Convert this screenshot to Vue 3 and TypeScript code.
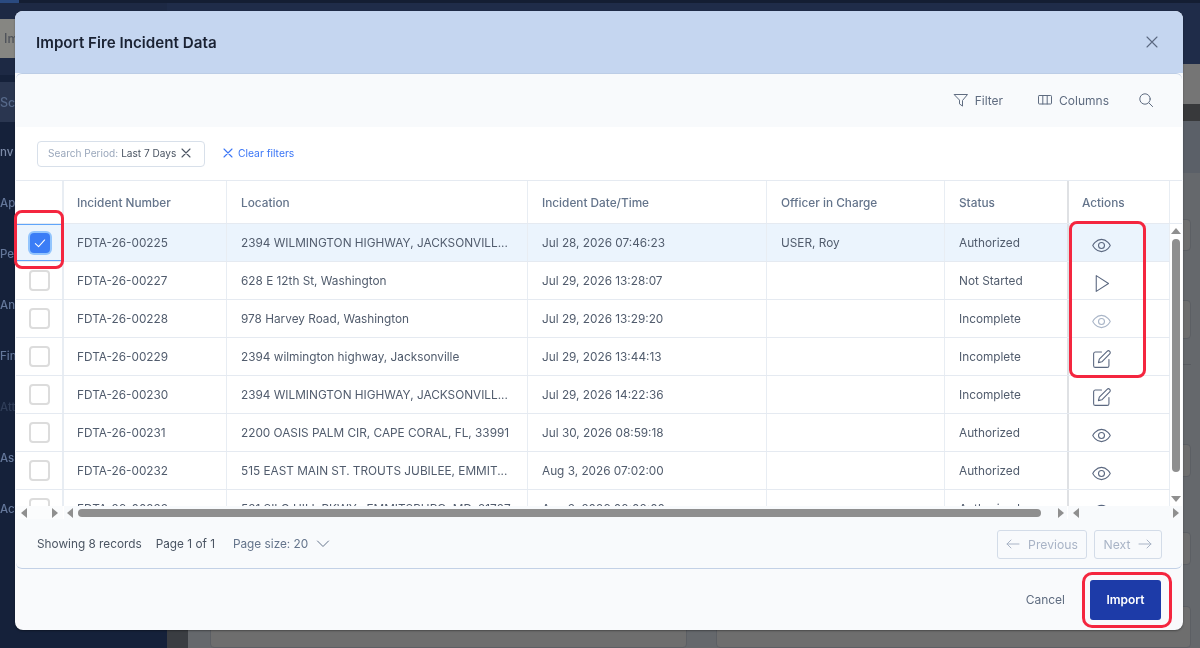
<script setup lang="ts">
type Action = 'eye' | 'play' | 'eye-off' | 'edit'
interface Row {
  id: string
  location: string
  date: string
  officer: string
  status: string
  action: Action
  selected?: boolean
}
const columns: string[] = ['Incident Number', 'Location', 'Incident Date/Time', 'Officer in Charge', 'Status']
const rows: Row[] = [
  { id: 'FDTA-26-00225', location: '2394 WILMINGTON HIGHWAY, JACKSONVILL...', date: 'Jul 28, 2026 07:46:23', officer: 'USER, Roy', status: 'Authorized', action: 'eye', selected: true },
  { id: 'FDTA-26-00227', location: '628 E 12th St, Washington', date: 'Jul 29, 2026 13:28:07', officer: '', status: 'Not Started', action: 'play' },
  { id: 'FDTA-26-00228', location: '978 Harvey Road, Washington', date: 'Jul 29, 2026 13:29:20', officer: '', status: 'Incomplete', action: 'eye-off' },
  { id: 'FDTA-26-00229', location: '2394 wilmington highway, Jacksonville', date: 'Jul 29, 2026 13:44:13', officer: '', status: 'Incomplete', action: 'edit' },
  { id: 'FDTA-26-00230', location: '2394 WILMINGTON HIGHWAY, JACKSONVILL...', date: 'Jul 29, 2026 14:22:36', officer: '', status: 'Incomplete', action: 'edit' },
  { id: 'FDTA-26-00231', location: '2200 OASIS PALM CIR, CAPE CORAL, FL, 33991', date: 'Jul 30, 2026 08:59:18', officer: '', status: 'Authorized', action: 'eye' },
  { id: 'FDTA-26-00232', location: '515 EAST MAIN ST. TROUTS JUBILEE, EMMIT...', date: 'Aug 3, 2026 07:02:00', officer: '', status: 'Authorized', action: 'eye' },
  { id: 'FDTA-26-00233', location: '531 SILO HILL PKWY., EMMITSBURG, MD, 21727', date: 'Aug 3, 2026 08:08:00', officer: '', status: 'Authorized', action: 'eye' },
]
const navItems: string[] = ['nv', 'Ap', 'Pe', 'Ana', 'Fin', 'Att', 'Ass', 'Act']
</script>

<template>
  <div class="page">
    <div class="backdrop">
      <div class="top-strip"><span class="strip-tab"></span></div>
      <div class="backdrop-main">
        <aside class="side">
          <div class="side-head"><span class="ghost-btn">Im</span></div>
          <div class="side-active">Sc</div>
          <div
            v-for="item in navItems"
            :key="item"
            class="side-item"
            :class="{ dim: item === 'Att' }"
          >{{ item }}</div>
        </aside>
        <div class="gutter-col">
          <div class="gutter-top"></div>
          <div class="gutter-body"></div>
        </div>
        <main class="content">
          <div class="content-top"></div>
          <div class="band-a"></div>
          <div class="band-b"></div>
          <div class="band-c"></div>
          <div class="form">
            <div class="ghost-field f1"></div>
            <div class="ghost-field f2"></div>
            <div class="ghost-rule"></div>
            <div class="ghost-field f3"></div>
            <div class="ghost-field f4"></div>
            <div class="ghost-grid">
              <div class="ghost-box"></div>
              <div class="ghost-box"></div>
            </div>
          </div>
        </main>
      </div>
    </div>

    <section class="modal">
      <header class="modal-head">
        <h1>Import Fire Incident Data</h1>
        <svg class="close" viewBox="0 0 12 12" width="12" height="12"><path d="M1 1l10 10M11 1L1 11" /></svg>
      </header>

      <div class="card">
        <div class="toolbar">
          <span class="tool">
            <svg viewBox="0 0 16 16" width="16" height="16"><path d="M1.5 2.5h13l-5 6v5.6l-3-2.2V8.5z" /></svg>
            Filter
          </span>
          <span class="tool">
            <svg viewBox="0 0 16 16" width="16" height="16"><rect x="1.5" y="3.5" width="13" height="8.5" rx=".8" /><path d="M5.8 3.5V12M10.2 3.5V12" /></svg>
            Columns
          </span>
          <svg class="search" viewBox="0 0 16 16" width="16" height="16"><circle cx="7" cy="7" r="5.2" /><path d="M11 11l3.6 3.6" /></svg>
        </div>

        <div class="filters">
          <span class="chip">
            <span class="chip-key">Search Period:</span>
            <span class="chip-val">Last 7 Days</span>
            <svg viewBox="0 0 10 10" width="10" height="10"><path d="M1 1l8 8M9 1L1 9" /></svg>
          </span>
          <span class="clear">
            <svg viewBox="0 0 10 10" width="10" height="10"><path d="M1 1l8 8M9 1L1 9" /></svg>
            Clear filters
          </span>
        </div>

        <div class="table">
          <div class="head">
            <div class="cell pin"></div>
            <div v-for="c in columns" :key="c" class="cell" :class="{ last: c === 'Status', first: c === 'Incident Number' }">{{ c }}</div>
            <div class="cell actions-cell">Actions</div>
            <div class="cell tail"></div>
          </div>
          <div class="body">
            <div class="rows">
              <div v-for="r in rows" :key="r.id" class="row" :class="{ selected: r.selected }">
                <div class="cell pin">
                  <span class="check" :class="{ on: r.selected }">
                    <svg v-if="r.selected" viewBox="0 0 12 12" width="14" height="14"><path d="M2 6.5l2.8 2.6L10 3.4" /></svg>
                  </span>
                </div>
                <div class="cell first">{{ r.id }}</div>
                <div class="cell">{{ r.location }}</div>
                <div class="cell">{{ r.date }}</div>
                <div class="cell">{{ r.officer }}</div>
                <div class="cell last">{{ r.status }}</div>
                <div class="cell actions-cell">
                  <svg class="act" :class="{ faint: r.action === 'eye-off' }" viewBox="0 0 24 24" width="21" height="21">
                    <template v-if="r.action === 'eye' || r.action === 'eye-off'">
                      <path d="M2 12s3.6-7 10-7 10 7 10 7-3.6 7-10 7-10-7-10-7z" />
                      <circle cx="12" cy="12" r="3.4" />
                    </template>
                    <polygon v-else-if="r.action === 'play'" points="6 3 20 12 6 21 6 3" />
                    <template v-else>
                      <path d="M12 3.5H5a2 2 0 0 0-2 2V19a2 2 0 0 0 2 2h13.5a2 2 0 0 0 2-2v-7" />
                      <path d="M18.4 2.6a2.1 2.1 0 0 1 3 3L12.4 14.6 8.5 15.6l1-3.9z" />
                    </template>
                  </svg>
                </div>
              </div>
            </div>
            <div class="vbar">
              <span class="arrow up"></span>
              <span class="vthumb"></span>
              <span class="arrow down"></span>
            </div>
          </div>
          <div class="hbar">
            <div class="hpart hpin"><span class="arrow left"></span><span class="arrow right"></span></div>
            <div class="hpart hmain"><span class="arrow left"></span><span class="hthumb"></span><span class="arrow right"></span></div>
            <div class="hpart hact"><span class="arrow left"></span><span class="arrow right"></span></div>
          </div>
        </div>

        <footer class="pager">
          <span class="dark">Showing 8 records</span>
          <span class="dark second">Page 1 of 1</span>
          <span class="size">
            Page size: 20
            <svg viewBox="0 0 14 8" width="14" height="8"><path d="M1.5 1l5.5 5.5L12.5 1" /></svg>
          </span>
          <span class="pager-btns">
            <span class="page-btn prev">
              <svg viewBox="0 0 14 10" width="14" height="10"><path d="M13 5H1M5 1L1 5l4 4" /></svg>
              Previous
            </span>
            <span class="page-btn next">
              Next
              <svg viewBox="0 0 14 10" width="14" height="10"><path d="M1 5h12M9 1l4 4-4 4" /></svg>
            </span>
          </span>
        </footer>
      </div>

      <footer class="modal-foot">
        <span class="cancel">Cancel</span>
        <button class="import" type="button">Import</button>
      </footer>
    </section>

    <span class="mark mark-check"></span>
    <span class="mark mark-actions"></span>
    <span class="mark mark-import"></span>
  </div>
</template>

<style scoped>
.page {
  position: relative;
  width: 1200px;
  height: 648px;
  overflow: hidden;
  font-family: Inter, "Liberation Sans", sans-serif;
  background: #65686c;
  filter: blur(.3px);
}
.backdrop {
  display: flex;
  flex-direction: column;
  height: 648px;
}
.top-strip {
  height: 3px;
  background: #141e33;
  flex: none;
  display: flex;
}
.strip-tab {
  width: 19px;
  background: #2a4a80;
}
.backdrop-main {
  flex: 1;
  display: flex;
  min-height: 0;
}
.side {
  width: 167px;
  flex: none;
  background: #15213a;
  color: #64779a;
  font-size: 11.5px;
  font-weight: 500;
  overflow: hidden;
}
.side-head {
  height: 72px;
  padding-top: 16px;
  box-sizing: border-box;
  background: #1d2944;
}
.ghost-btn {
  display: flex;
  align-items: center;
  height: 39px;
  padding-left: 4px;
  background: #868682;
  color: #4f535a;
  font-size: 12.5px;
}
.side-active {
  display: flex;
  align-items: center;
  height: 40px;
  margin-top: 7px;
  background: #2a3650;
  color: #56698a;
  font-size: 12.5px;
}
.side-item {
  height: 51px;
  display: flex;
  align-items: center;
}
.side-active + .side-item {
  margin-top: 4px;
  color: #7c8ba8;
}
.side-item.dim {
  color: #2f3d58;
}
.gutter-col {
  width: 21px;
  flex: none;
  display: flex;
  flex-direction: column;
}
.gutter-top {
  height: 72px;
  background: #1f2c49;
}
.gutter-body {
  flex: 1;
  background: #3a3d42;
}
.content {
  flex: 1;
  display: flex;
  flex-direction: column;
  min-width: 0;
}
.content-top {
  height: 72px;
  background: #1f2c49;
}
.band-a {
  height: 47px;
  background: #757575;
}
.band-b {
  height: 21px;
  background: #38393b;
}
.band-c {
  height: 61px;
  background: #5b6068;
}
.form {
  flex: 1;
  background: #65686c;
  padding: 46px 9px 0 22px;
  display: flex;
  flex-direction: column;
}
.ghost-field {
  width: 200px;
  align-self: flex-end;
  background: #6e6e6e;
  border: 1px solid #5c5f64;
  border-radius: 4px;
  box-sizing: border-box;
  flex: none;
}
.f1 { height: 32px; }
.f2 { height: 39px; margin-top: 49px; }
.ghost-rule {
  width: 200px;
  align-self: flex-end;
  height: 1px;
  flex: none;
  margin-top: 25px;
  background: #595c61;
}
.f3 { height: 33px; margin-top: 79px; }
.f4 { height: 33px; margin-top: 55px; }
.ghost-grid {
  display: grid;
  grid-template-columns: 477px 475px;
  gap: 29px;
  margin-top: 41px;
  flex: none;
}
.ghost-box {
  height: 40px;
  background: #6e6e6e;
  border: 1px solid #5c5f64;
  border-radius: 4px;
}

.modal {
  position: absolute;
  left: 15px;
  top: 11px;
  width: 1168px;
  height: 619px;
  border-radius: 8px;
  background: #f9fafc;
  display: flex;
  flex-direction: column;
  overflow: hidden;
  box-shadow: 0 1px 2px rgba(0, 0, 0, .35);
}
.modal-head {
  height: 62px;
  flex: none;
  background: #c5d6f0;
  display: flex;
  align-items: center;
  justify-content: space-between;
  padding: 0 25px 0 21px;
}
.modal-head h1 {
  margin: 0;
  font-size: 15.2px;
  font-weight: 600;
  color: #1a2233;
}
svg {
  fill: none;
  stroke-linecap: round;
  stroke-linejoin: round;
}
.close {
  stroke: #5b6880;
  stroke-width: 1.1;
}
.card {
  margin: 0 1px;
  height: 496px;
  flex: none;
  box-sizing: border-box;
  border-radius: 6px;
  border-top: 1px solid #bccde6;
  border-bottom: 1px solid #c3d1e6;
  background: #f8fafc;
  display: flex;
  flex-direction: column;
  overflow: hidden;
}
.toolbar {
  height: 53px;
  flex: none;
  display: flex;
  align-items: center;
  justify-content: flex-end;
  padding: 0 28px 1px 0;
  box-sizing: border-box;
  font-size: 12px;
  color: #5f6c80;
}
.tool {
  display: flex;
  align-items: center;
  gap: 6px;
  margin-right: 34px;
}
.tool svg, .search {
  stroke: #5f6c80;
  stroke-width: 1;
}
.tool:nth-child(2) {
  margin-right: 29px;
}
.filters {
  height: 53px;
  flex: none;
  background: #fff;
  display: flex;
  align-items: center;
  padding-left: 21px;
  gap: 18px;
  font-size: 10.1px;
}
.chip {
  box-sizing: border-box;
  width: 168px;
  height: 26px;
  display: flex;
  align-items: center;
  padding: 0 0 1px 10px;
  border: 1px solid #d8e0ea;
  border-radius: 4px;
  gap: 3px;
}
.chip-key { color: #9aa7bb; }
.chip-val { color: #4b5563; }
.chip svg {
  stroke: #4b5563;
  stroke-width: 1.1;
  margin-left: 2px;
}
.clear {
  display: flex;
  align-items: center;
  gap: 5px;
  color: #3b76f6;
  font-size: 10.3px;
  padding-bottom: 1px;
}
.clear svg {
  stroke: #3b76f6;
  stroke-width: 1.1;
}
.table {
  flex: none;
  background: #fff;
  border-top: 1px solid #e5eaf1;
  font-size: 11.8px;
  color: #515c6d;
}
.head {
  display: grid;
  grid-template-columns: 48px 163px 301px 239px 178px 124px 101px 12px;
  height: 43px;
  box-sizing: border-box;
  border-bottom: 1px solid #e5eaf1;
  color: #64748b;
  font-weight: 500;
}
.cell {
  box-sizing: border-box;
  display: flex;
  align-items: center;
  padding-left: 14px;
  border-right: 1px solid #e8edf3;
  white-space: nowrap;
  overflow: hidden;
}
.head .cell {
  padding-top: 2px;
}
.cell.first {
  padding-left: 13px;
}
.cell.last {
  border-right: 2px solid #dfe1e4;
}
.cell.pin {
  padding-left: 1px;
  justify-content: center;
  border-right-width: 2px;
}
.cell.tail {
  border-right: 0;
  padding: 0;
}
.body {
  display: flex;
  height: 282px;
  overflow: hidden;
}
.rows {
  width: 1154px;
  flex: none;
}
.row {
  display: grid;
  grid-template-columns: 48px 163px 301px 239px 178px 124px 101px;
  height: 38px;
  box-sizing: border-box;
  border-bottom: 1px solid #e5eaf1;
}
.row.selected {
  background: #ebf4fd;
}
.row.selected .pin {
  box-shadow: inset 0 -1px 0 #60a5fa, inset 0 1px 0 #60a5fa, inset 1px 0 0 #60a5fa;
}
.check {
  box-sizing: border-box;
  width: 21px;
  height: 21px;
  border: 2px solid #dcdcdc;
  border-radius: 4px;
  background: #fff;
  display: flex;
  align-items: center;
  justify-content: center;
}
.check.on {
  width: 20px;
  height: 20px;
  border: 0;
  background: #3b7df6;
  box-shadow: 0 0 0 2px #93c5fd;
}
.check svg {
  stroke: #fff;
  stroke-width: .9;
}
.actions-cell {
  padding-left: 13px;
}
.row .actions-cell {
  padding-left: 22px;
  padding-top: 5px;
}
.act {
  stroke: #5b6880;
  stroke-width: 1.25;
  flex: none;
}
.act.faint {
  stroke: #a9b5c7;
}
.vbar {
  width: 12px;
  flex: none;
  display: flex;
  flex-direction: column;
  align-items: center;
  background: #fff;
}
.vthumb {
  width: 8px;
  height: 233px;
  margin-top: 5px;
  margin-bottom: auto;
  border-radius: 4px;
  background: #8f8f8f;
}
.arrow {
  flex: none;
  width: 0;
  height: 0;
  border: 5px solid transparent;
}
.arrow.up {
  margin-top: 4px;
  border-top-width: 0;
  border-bottom: 6px solid #8f8f8f;
}
.arrow.down {
  margin-bottom: 4px;
  border-bottom-width: 0;
  border-top: 6px solid #8f8f8f;
}
.arrow.left {
  border-left-width: 0;
  border-right: 6px solid #8f8f8f;
}
.arrow.right {
  border-right-width: 0;
  border-left: 6px solid #8f8f8f;
}
.hbar {
  display: grid;
  grid-template-columns: 48px 1004px 114px;
  height: 13px;
  background: #f8fafc;
}
.hpart {
  display: flex;
  align-items: center;
  justify-content: space-between;
  padding: 0 5px;
}
.hpin {
  background: #fbfcfd;
  border-right: 1px solid #fff;
}
.hmain {
  padding: 0 3px;
  border-right: 1px solid #fff;
}
.hact {
  padding: 0 3px 0 5px;
}
.hthumb {
  width: 963px;
  height: 8px;
  margin: 0 auto 0 5px;
  border-radius: 4px;
  background: #8f8f8f;
}
.pager {
  flex: 1;
  display: flex;
  align-items: center;
  padding: 1px 20px 0 21px;
  font-size: 11.8px;
}
.dark {
  color: #4b5563;
  margin-right: 14px;
}
.dark.second {
  margin-right: 18px;
}
.size {
  color: #64748b;
  display: flex;
  align-items: center;
  gap: 8px;
}
.size svg {
  stroke: #64748b;
  stroke-width: 1;
}
.pager-btns {
  margin-left: auto;
  display: flex;
  gap: 7px;
}
.page-btn {
  box-sizing: border-box;
  height: 29px;
  display: flex;
  align-items: center;
  justify-content: center;
  gap: 8px;
  border: 1px solid #d3dce8;
  border-radius: 3px;
  color: #a9b4c6;
  font-size: 12.2px;
}
.page-btn svg {
  stroke: #a9b4c6;
  stroke-width: 1;
}
.prev { width: 90px; }
.next { width: 68px; }
.modal-foot {
  flex: 1;
  display: flex;
  align-items: center;
  justify-content: flex-end;
  padding-right: 22px;
  gap: 25px;
}
.cancel {
  font-size: 12px;
  color: #5f6c80;
}
.import {
  width: 71px;
  height: 40px;
  border: 0;
  border-radius: 3px;
  background: #1d3ba8;
  color: #fff;
  font: 600 12px Inter, "Liberation Sans", sans-serif;
  padding: 0;
}
.mark {
  position: absolute;
  box-sizing: border-box;
  border: 3px solid #f4263f;
  border-radius: 8px;
  pointer-events: none;
}
.mark-check { left: 14px; top: 210px; width: 50px; height: 59px; }
.mark-actions { left: 1069px; top: 221px; width: 77px; height: 157px; }
.mark-import { left: 1082px; top: 572px; width: 90px; height: 56px; border-radius: 10px; }
</style>
